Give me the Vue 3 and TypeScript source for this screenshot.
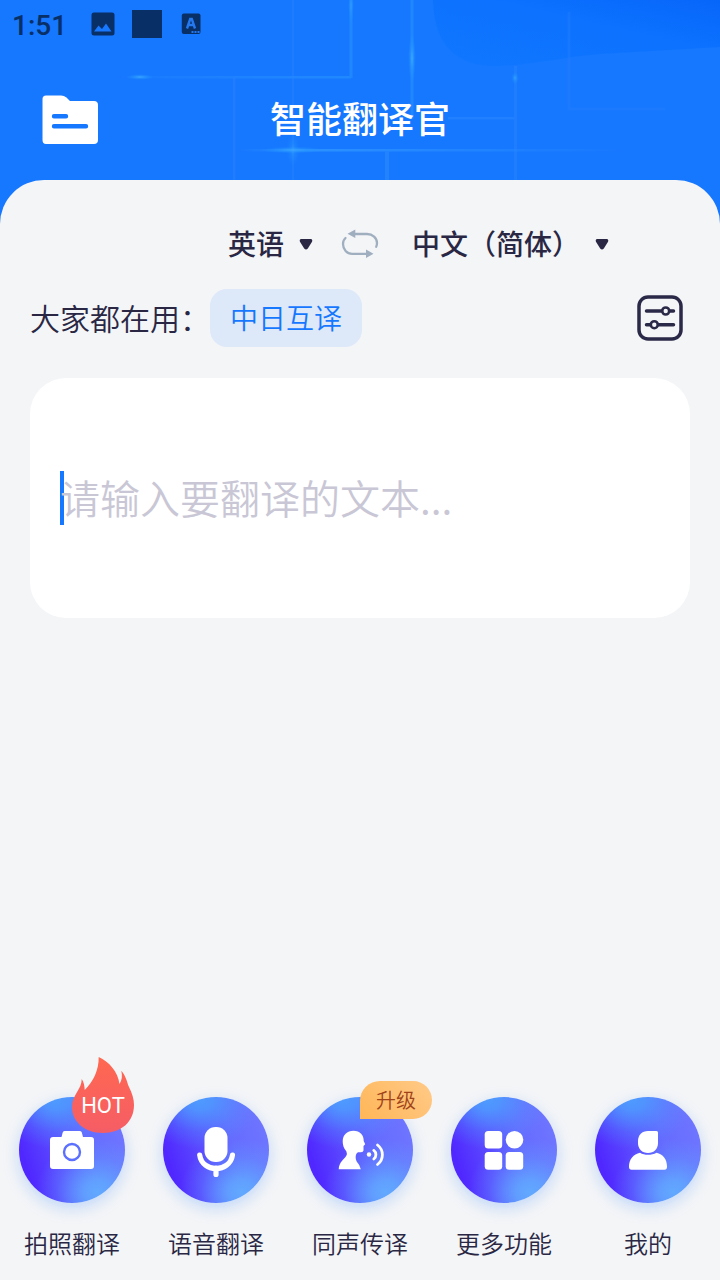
<script setup lang="ts">
import { ref } from 'vue'

type IconName = 'camera' | 'mic' | 'speak' | 'grid' | 'user'

interface NavItem {
  icon: IconName
  label: string
  badge?: 'hot' | 'upgrade'
}

const items: NavItem[] = [
  { icon: 'camera', label: '拍照翻译', badge: 'hot' },
  { icon: 'mic', label: '语音翻译' },
  { icon: 'speak', label: '同声传译', badge: 'upgrade' },
  { icon: 'grid', label: '更多功能' },
  { icon: 'user', label: '我的' },
]
const source = ref('英语')
const target = ref('中文（简体）')
</script>

<template>
  <div class="app" lang="zh-CN">
    <svg class="circuit" viewBox="0 0 720 230" aria-hidden="true">
      <defs>
        <linearGradient id="swoop" x1="0" y1="1" x2="1" y2="0">
          <stop offset="0" stop-color="#1077ff" />
          <stop offset="0.6" stop-color="#0c72ff" />
          <stop offset="1" stop-color="#0766fa" />
        </linearGradient>
        <linearGradient id="fadeRight" x1="0" x2="1">
          <stop offset="0" stop-color="#2b8dff" stop-opacity="0" />
          <stop offset="0.2" stop-color="#2b90ff" />
          <stop offset="1" stop-color="#2b90ff" stop-opacity="0" />
        </linearGradient>
        <linearGradient id="fadeLeft" x1="0" x2="1">
          <stop offset="0" stop-color="#2b90ff" stop-opacity="0" />
          <stop offset="1" stop-color="#2089ff" />
        </linearGradient>
        <radialGradient id="glow">
          <stop offset="0" stop-color="#3fa6ff" />
          <stop offset="0.4" stop-color="#2a9bff" stop-opacity="0.6" />
          <stop offset="1" stop-color="#2090ff" stop-opacity="0" />
        </radialGradient>
      </defs>
      <path d="M433 0C434 40 452 64 490 66C530 66 560 57 600 54L720 47V0Z" fill="url(#swoop)" />
      <rect x="110" y="76" width="241" height="2.5" fill="url(#fadeLeft)" />
      <rect x="349.500" width="3" height="78" fill="#2088ff" />
      <rect x="410.500" width="3" height="119" fill="#2088ff" />
      <rect x="292" width="2" height="180" fill="#2c86ff" opacity=".35" />
      <rect x="233" y="78" width="2.500" height="102" fill="#2c82ff" opacity=".5" />
      <rect x="235" y="149" width="400" height="2.500" fill="url(#fadeRight)" />
      <rect x="385" y="151" width="4" height="29" fill="#2383ff" />
      <rect x="448" y="117" width="66" height="2.500" fill="#2180ff" />
      <rect x="514" y="66" width="3" height="114" fill="#2987ff" opacity=".45" />
      <path d="M569 12V109H665" fill="none" stroke="#2b80ff" stroke-width="3" opacity=".3" />
      <ellipse cx="140" cy="77" rx="14" ry="3" fill="url(#glow)" />
      <ellipse cx="293" cy="150" rx="32" ry="3.500" fill="url(#glow)" />
      <ellipse cx="293" cy="150" rx="7" ry="17" fill="url(#glow)" opacity=".5" />
      <ellipse cx="412" cy="58" rx="4" ry="25" fill="url(#glow)" />
      <ellipse cx="351" cy="6" rx="3" ry="18" fill="url(#glow)" opacity=".6" />
      <ellipse cx="515" cy="78" rx="4" ry="6" fill="url(#glow)" opacity=".8" />
    </svg>

    <div class="status">
      <span class="clock">1:51</span>
      <svg class="status-picture" viewBox="0 0 24 24">
        <rect x="0.500" y="0.500" width="23" height="23" rx="2.500" fill="#092f67" />
        <path d="M3 19.500L7.500 13.500L11 17L15 11.500L20.500 19.500Z" fill="#1677ff" />
      </svg>
      <span class="status-block"></span>
      <svg class="status-a" viewBox="0 0 20 22">
        <rect x="0.800" y="0.500" width="18.700" height="20.500" rx="2" fill="#092f67" />
        <path d="M6 15.500L9.200 6H10.800L14 15.500M7.500 12H12.500" fill="none" stroke="#2478f0" stroke-width="2.400" />
        <path d="M10.500 19H18.500" stroke="#2478f0" stroke-width="1.800" stroke-dasharray="2 1" />
      </svg>
    </div>

    <header class="header">
      <svg class="folder" viewBox="0 0 56 50">
        <path d="M4 0.500H19Q22 0.500 24.500 2.500L28 6H52Q56 6 56 10V45Q56 49 52 49H4Q0.500 49 0.500 45V4Q0.500 0.500 4 0.500Z" fill="#fff" />
        <path d="M12 21.300H24M12 31.300H44" stroke="#1677ff" stroke-width="4.400" stroke-linecap="round" />
      </svg>
      <h1>智能翻译官</h1>
    </header>

    <main class="sheet">
      <div class="langs">
        <span class="lang">{{ source }}</span>
        <svg class="caret" viewBox="0 0 14 12"><path d="M2 1H12Q14 1.500 12.900 4L8.800 10.500Q7 12.500 5.200 10.500L1.100 4Q0 1.500 2 1Z" fill="#292744" /></svg>
        <svg class="swap" viewBox="0 0 38 30">
          <g fill="none" stroke="#a0afc0" stroke-width="2.300" stroke-linecap="round">
            <path d="M12 5H26C31.500 5 36 9 36 14C36 15.500 35.700 16.800 35.200 17.700" />
            <path d="M4.500 9C2.800 10.500 2 12.500 2 15C2 20.500 6 24.800 11 24.800H26" />
          </g>
          <path d="M6.500 4.800L14.300 0.500V9ZM32.500 24.800L25 20.500V29Z" fill="#a0afc0" />
        </svg>
        <span class="lang">{{ target }}</span>
        <svg class="caret" viewBox="0 0 14 12"><path d="M2 1H12Q14 1.500 12.900 4L8.800 10.500Q7 12.500 5.200 10.500L1.100 4Q0 1.500 2 1Z" fill="#292744" /></svg>
      </div>

      <div class="popular">
        <span class="popular-title">大家都在用：</span>
        <button class="pill">中日互译</button>
        <svg class="settings" viewBox="0 0 46 46" fill="none" stroke="#2b2948" stroke-width="3.500">
          <rect x="2" y="2" width="42" height="42" rx="9" />
          <path d="M9.500 16H24.500M33 16H36.500M9.500 29.700H13M21.500 29.700H36.500" stroke-linecap="round" />
          <circle cx="28.700" cy="16" r="3.500" stroke-width="2.600" />
          <circle cx="17.300" cy="29.700" r="3.500" stroke-width="2.600" />
        </svg>
      </div>

      <section class="input-card">
        <div class="field"><i class="cursor"></i><span class="placeholder">请输入要翻译的文本...</span></div>
      </section>

      <nav class="nav">
        <div v-for="item in items" :key="item.label" class="nav-item">
          <div class="disc">
            <svg viewBox="0 0 106 106" fill="#fff">
              <template v-if="item.icon === 'camera'">
                <path d="M34 40H42.500L43.700 35.500Q44 34 45.500 34H61Q62.500 34 62.800 35.500L64 40H72Q75 40 75 43V69Q75 72 72 72H34Q31 72 31 69V43Q31 40 34 40Z" />
                <circle cx="53" cy="55" r="8" stroke="#5c70ff" stroke-width="2.400" />
              </template>
              <template v-else-if="item.icon === 'mic'">
                <rect x="41.500" y="30" width="23" height="35" rx="11" />
                <path d="M36.700 58C39 76 67 76 69.500 58M53 71V77.500" fill="none" stroke="#fff" stroke-width="5.200" stroke-linecap="round" />
              </template>
              <template v-else-if="item.icon === 'speak'">
                <path d="M46.500 33.700C53 33.700 57 38 56.700 44L58.200 47.300L56.500 49V53.500Q56.300 55.300 54 55.300H51C48 57 48.200 62 50 65Q53 68 53.800 72.300H31.700C32 65 37 62.500 39.200 59Q40.500 56.500 39.300 54.200C36.800 51.500 35.700 48 35.700 44.500C35.700 38 40 33.700 46.500 33.700Z" />
                <circle cx="62" cy="57.500" r="2.200" />
                <path d="M66.800 53.400C69.600 55.500 69.600 59.800 66.800 62M70.500 48C77 53 77 62.500 70.500 67.500" fill="none" stroke="#fff" stroke-width="2.800" stroke-linecap="round" />
              </template>
              <template v-else-if="item.icon === 'grid'">
                <rect x="33.700" y="34" width="17.500" height="17.500" rx="3.500" />
                <circle cx="63.500" cy="42.700" r="8.800" />
                <rect x="33.700" y="55" width="17.500" height="17.700" rx="3.500" />
                <rect x="54.700" y="55" width="17.500" height="17.700" rx="3.500" />
              </template>
              <template v-else>
                <path d="M53 34H61.500Q63 34 63 35.500V46C63 52 59 56 53 56S43 52 43 46V44C43 38 47 34 53 34Z" />
                <path d="M45 55.800C49.500 58.500 56.500 58.500 61.500 55.800C68 57 72 62.500 72 69.500Q72 72.700 69.500 72.700H36.500Q34 72.700 34 69.500C34 62.500 38.500 57 45 55.800Z" />
              </template>
            </svg>
          </div>
          <span class="label">{{ item.label }}</span>

          <div v-if="item.badge === 'hot'" class="hot">
            <svg viewBox="0 0 62 76">
              <defs>
                <linearGradient id="flame" x1="0" y1="0" x2="0" y2="1">
                  <stop offset="0" stop-color="#ff6850" />
                  <stop offset="1" stop-color="#f55d66" />
                </linearGradient>
              </defs>
              <path d="M26.700 0C37 4.500 46 15 47.500 27C50 23 50.500 19 49.300 13.700C54 19 55 25 57 30C60 36 62 42 62 48C62 65 49 76 31 76C13 76 0 65 0 50C0 38 10 32 9.700 22C12 25 12.500 29 12.700 33C21 25 27 13 26.700 0Z" fill="url(#flame)" />
            </svg>
            <span>HOT</span>
          </div>
          <span v-if="item.badge === 'upgrade'" class="upgrade">升级</span>
        </div>
      </nav>
    </main>
  </div>
</template>

<style>
body {
  margin: 0;
}
</style>

<style scoped>
.app {
  position: relative;
  display: flex;
  flex-direction: column;
  width: 720px;
  height: 1280px;
  overflow: hidden;
  background: #1677ff;
  color: #292744;
  font-family: "Noto Sans CJK SC", sans-serif;
  font-weight: 350;
}
.circuit {
  position: absolute;
  top: 0;
  left: 0;
  width: 720px;
  height: 230px;
}
.status {
  position: relative;
  display: flex;
  align-items: center;
  height: 48px;
  padding-left: 12px;
  color: #092f67;
}
.clock {
  width: 79px;
  padding-top: 3px;
  font: 500 28px/32px Roboto, sans-serif;
}
.status-picture {
  width: 24px;
  height: 24px;
}
.status-block {
  width: 30px;
  height: 28px;
  margin-left: 17px;
  background: #092f67;
}
.status-a {
  width: 20px;
  height: 22px;
  margin-left: 19px;
}
.header {
  position: relative;
  display: flex;
  align-items: center;
  justify-content: center;
  height: 132px;
}
.folder {
  position: absolute;
  left: 42px;
  top: 47px;
  width: 56px;
  height: 50px;
}
h1 {
  margin: 6px 0 0;
  color: #fff;
  font-size: 36px;
  font-weight: 500;
  line-height: 54px;
}
.sheet {
  position: relative;
  display: flex;
  flex: 1;
  flex-direction: column;
  border-radius: 44px 44px 0 0;
  background: #f4f5f7;
}
.langs {
  display: flex;
  align-items: center;
  height: 40px;
  margin-top: 44px;
  padding-left: 228px;
  font-size: 28px;
  font-weight: 500;
  line-height: 40px;
  white-space: nowrap;
}
.lang {
  padding-bottom: 2px;
}
.caret {
  width: 14px;
  height: 12px;
  margin-left: 15px;
}
.swap {
  width: 38px;
  height: 30px;
  margin: 0 33px 0 28px;
}
.popular {
  display: flex;
  align-items: center;
  height: 58px;
  margin-top: 25px;
  padding: 0 37px 0 30px;
  font-size: 30px;
  white-space: nowrap;
}
.popular-title {
  padding-bottom: 3px;
}
.pill {
  width: 152px;
  height: 58px;
  padding: 0 0 2px;
  border: 0;
  border-radius: 17px;
  background: #dde8f9;
  color: #1677ff;
  font: 350 28px/56px "Noto Sans CJK SC", sans-serif;
}
.settings {
  width: 46px;
  height: 46px;
  margin-left: auto;
}
.input-card {
  display: flex;
  align-items: center;
  height: 240px;
  margin: 31px 30px 0;
  padding-left: 30px;
  border-radius: 36px;
  background: #fff;
}
.field {
  display: flex;
  align-items: center;
  height: 54px;
}
.cursor {
  width: 4px;
  height: 54px;
  margin-right: -4px;
  background: #1677ff;
}
.placeholder {
  position: relative;
  padding-bottom: 2px;
  color: #c9c7d5;
  font-size: 40px;
  line-height: 54px;
}
.nav {
  display: grid;
  grid-template-columns: repeat(5, 144px);
  margin-top: auto;
  height: 183px;
}
.nav-item {
  position: relative;
  display: flex;
  flex-direction: column;
  align-items: center;
}
.disc {
  width: 106px;
  height: 106px;
  border-radius: 50%;
  background:
    radial-gradient(ellipse 62px 54px at 74% 90%, #61a9ff 0, rgba(97, 169, 255, 0.85) 22%, rgba(97, 169, 255, 0.28) 65%, rgba(97, 169, 255, 0) 100%),
    radial-gradient(ellipse 62px 50px at 34% 2%, #4d9cff 0, rgba(77, 156, 255, 0.85) 22%, rgba(77, 156, 255, 0.28) 65%, rgba(77, 156, 255, 0) 100%),
    linear-gradient(72deg, #5028ff 14%, #656bff 64%, #7279ff 100%);
  box-shadow: 0 5px 16px rgba(70, 145, 255, 0.3);
}
.disc svg {
  display: block;
}
.label {
  margin-top: 22px;
  font-size: 24px;
  line-height: 36px;
}
.hot {
  position: absolute;
  top: -40px;
  left: 72px;
  width: 62px;
  height: 76px;
}
.hot svg {
  display: block;
}
.hot span {
  position: absolute;
  top: 36px;
  width: 62px;
  color: #fff;
  font: 22px/26px Roboto, sans-serif;
  text-align: center;
}
.upgrade {
  position: absolute;
  top: -16px;
  left: 72px;
  width: 72px;
  height: 38px;
  border-radius: 20px 19px 19px 0;
  background: linear-gradient(45deg, #ffb657, #ffca88);
  color: #a0431a;
  font-size: 20px;
  line-height: 37px;
  text-align: center;
}
</style>
